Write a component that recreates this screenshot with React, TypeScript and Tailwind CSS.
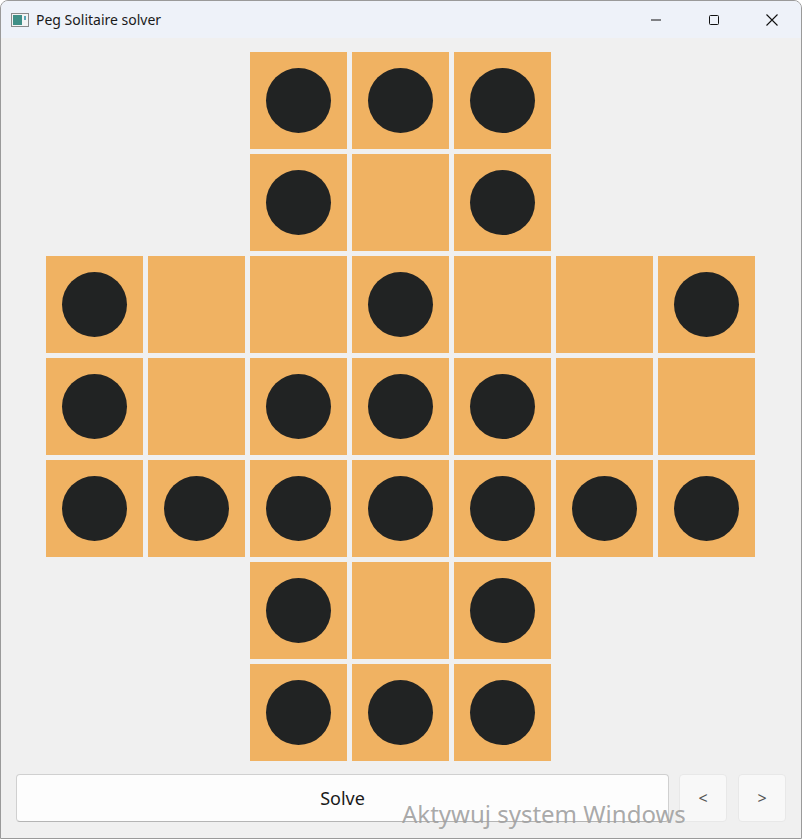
const board: (number | null)[][] = [
  [null, null, 1, 1, 1, null, null],
  [null, null, 1, 0, 1, null, null],
  [1, 0, 0, 1, 0, 0, 1],
  [1, 0, 1, 1, 1, 0, 0],
  [1, 1, 1, 1, 1, 1, 1],
  [null, null, 1, 0, 1, null, null],
  [null, null, 1, 1, 1, null, null],
];

const Cell = ({ v }: { v: number | null }) => {
  if (v === null) return <div className="w-[97px] h-[97px]" />;
  return (
    <div className="w-[97px] h-[97px] bg-[#f0b262] flex items-center justify-center">
      {v === 1 && <div className="w-[65px] h-[65px] rounded-full bg-[#212323]" />}
    </div>
  );
};

export default function App() {
  return (
    <div
      className="relative w-[802px] h-[839px] bg-[#f0f0f0] border border-[#9a9a9a] rounded-t-[8px] overflow-hidden flex flex-col"
      style={{ fontFamily: '"Noto Sans", "Open Sans", sans-serif' }}
    >
      {/* title bar */}
      <div className="h-[37px] bg-[#eef2f9] flex items-center shrink-0">
        <svg className="ml-[10px]" width="18" height="14" viewBox="0 0 18 14">
          <rect x="0.5" y="0.5" width="17" height="13" fill="#f4f4f4" stroke="#8a8a8a" />
          <rect x="2" y="2" width="9" height="10" fill="#3f8f86" />
          <rect x="13" y="3" width="2" height="4" fill="#5aa7b7" />
        </svg>
        <span className="ml-[7px] text-[14px] text-[#1a1a1a]">Peg Solitaire solver</span>
        <div className="ml-auto flex items-center h-full">
          <div className="w-[58px] h-full flex items-center justify-center">
            <svg width="12" height="12" viewBox="0 0 12 12">
              <line x1="1" y1="6" x2="11" y2="6" stroke="#111" strokeWidth="1" />
            </svg>
          </div>
          <div className="w-[58px] h-full flex items-center justify-center">
            <svg width="12" height="12" viewBox="0 0 12 12">
              <rect x="1.5" y="1.5" width="9" height="9" rx="1" fill="none" stroke="#111" strokeWidth="1" />
            </svg>
          </div>
          <div className="w-[58px] h-full flex items-center justify-center">
            <svg width="14" height="14" viewBox="0 0 14 14">
              <path d="M1.5 1.5 L12.5 12.5 M12.5 1.5 L1.5 12.5" stroke="#111" strokeWidth="1.1" />
            </svg>
          </div>
        </div>
      </div>

      {/* board */}
      <div className="mt-[14px] ml-[45px] grid grid-cols-[repeat(7,97px)] gap-[5px]">
        {board.map((row, r) => row.map((v, c) => <Cell key={`${r}-${c}`} v={v} />))}
      </div>

      {/* controls */}
      <div className="mt-[13px] ml-[15px] flex items-center gap-[10px]">
        <button className="w-[653px] h-[48px] bg-[#fdfdfd] border border-[#d0d0d0] border-b-[#b5b5b5] rounded-[4px] text-[18px] text-[#1a1a1a]">
          Solve
        </button>
        <button className="w-[48px] h-[48px] bg-[#f8f8f8] border border-[#e8e8e8] rounded-[4px] text-[16px] text-[#555]">
          &lt;
        </button>
        <button className="w-[48px] h-[48px] ml-[1px] bg-[#f8f8f8] border border-[#e8e8e8] rounded-[4px] text-[16px] text-[#555]">
          &gt;
        </button>
      </div>

      {/* windows activation watermark */}
      <div className="absolute left-[401px] top-[801px] text-[24px] leading-none text-[#9f9f9f]/90 pointer-events-none">
        Aktywuj system Windows
      </div>
    </div>
  );
}
